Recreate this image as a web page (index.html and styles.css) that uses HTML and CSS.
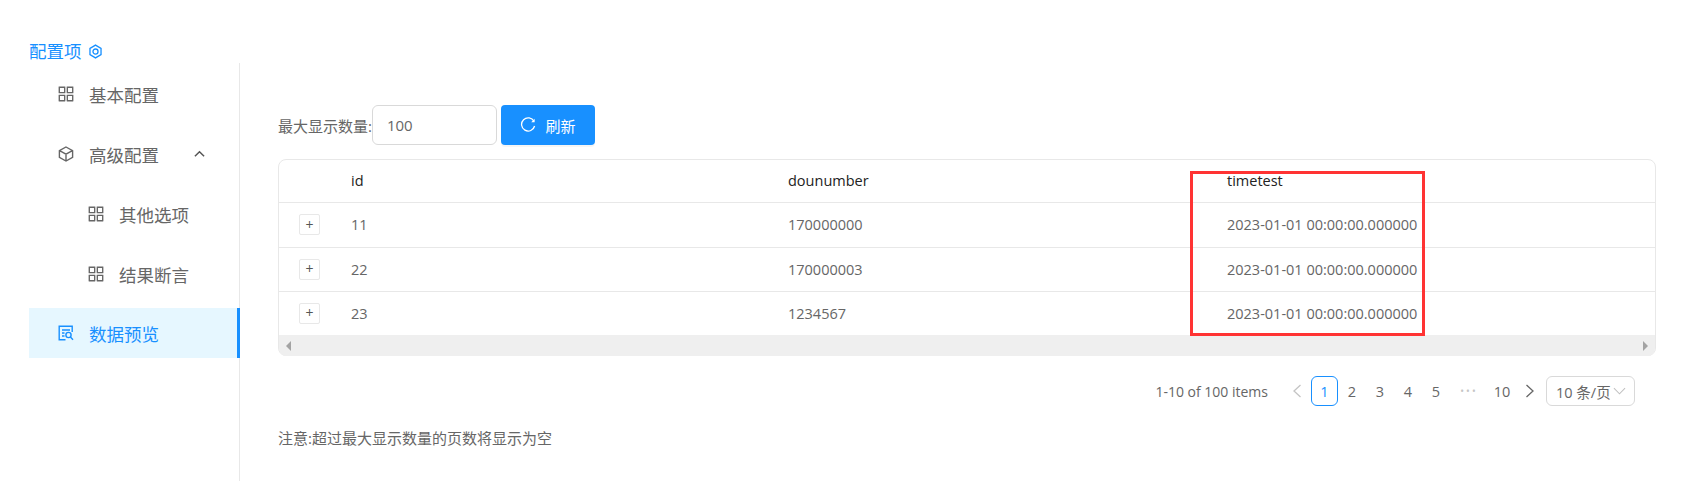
FILE: index.html
```html
<!DOCTYPE html>
<html lang="zh-CN">
<head>
<meta charset="utf-8">
<title>配置项</title>
<link rel="stylesheet" href="styles.css">
</head>
<body>
<div class="app">
  <header class="title">
    <span>配置项</span>
    <svg class="title-icon" viewBox="0 0 16 16"><path d="M8 1.2l5.900 3.400v6.800L8 14.800l-5.900-3.400V4.600z"/><circle cx="8" cy="8" r="2.700"/></svg>
  </header>
  <div class="layout">
    <nav class="menu">
      <div class="item">
        <svg class="icon" viewBox="64 64 896 896"><path class="solid" d="M464 144H160c-8.800 0-16 7.200-16 16v304c0 8.800 7.200 16 16 16h304c8.800 0 16-7.200 16-16V160c0-8.800-7.200-16-16-16zm-52 268H212V212h200v200zm452-268H560c-8.800 0-16 7.200-16 16v304c0 8.800 7.200 16 16 16h304c8.800 0 16-7.200 16-16V160c0-8.800-7.200-16-16-16zm-52 268H612V212h200v200zM464 544H160c-8.800 0-16 7.200-16 16v304c0 8.800 7.200 16 16 16h304c8.800 0 16-7.200 16-16V560c0-8.800-7.200-16-16-16zm-52 268H212V612h200v200zm452-268H560c-8.800 0-16 7.200-16 16v304c0 8.800 7.200 16 16 16h304c8.800 0 16-7.200 16-16V560c0-8.800-7.200-16-16-16zm-52 268H612V612h200v200z"/></svg>
        <span>基本配置</span>
      </div>
      <div class="item">
        <svg class="icon line" viewBox="0 0 18 18"><path d="M9 2l6.600 3.600v6.800L9 16l-6.600-3.600V5.600zM2.600 5.700L9 9.200l6.400-3.500M9 9.200V16"/></svg>
        <span>高级配置</span>
        <svg class="chevron" viewBox="0 0 12 8"><path d="M1 6.500L6 1.500l5 5"/></svg>
      </div>
      <div class="item sub">
        <svg class="icon" viewBox="64 64 896 896"><path class="solid" d="M464 144H160c-8.800 0-16 7.200-16 16v304c0 8.800 7.200 16 16 16h304c8.800 0 16-7.200 16-16V160c0-8.800-7.200-16-16-16zm-52 268H212V212h200v200zm452-268H560c-8.800 0-16 7.200-16 16v304c0 8.800 7.200 16 16 16h304c8.800 0 16-7.200 16-16V160c0-8.800-7.200-16-16-16zm-52 268H612V212h200v200zM464 544H160c-8.800 0-16 7.200-16 16v304c0 8.800 7.200 16 16 16h304c8.800 0 16-7.200 16-16V560c0-8.800-7.200-16-16-16zm-52 268H212V612h200v200zm452-268H560c-8.800 0-16 7.200-16 16v304c0 8.800 7.200 16 16 16h304c8.800 0 16-7.200 16-16V560c0-8.800-7.200-16-16-16zm-52 268H612V612h200v200z"/></svg>
        <span>其他选项</span>
      </div>
      <div class="item sub">
        <svg class="icon" viewBox="64 64 896 896"><path class="solid" d="M464 144H160c-8.800 0-16 7.200-16 16v304c0 8.800 7.200 16 16 16h304c8.800 0 16-7.200 16-16V160c0-8.800-7.200-16-16-16zm-52 268H212V212h200v200zm452-268H560c-8.800 0-16 7.200-16 16v304c0 8.800 7.200 16 16 16h304c8.800 0 16-7.200 16-16V160c0-8.800-7.200-16-16-16zm-52 268H612V212h200v200zM464 544H160c-8.800 0-16 7.200-16 16v304c0 8.800 7.200 16 16 16h304c8.800 0 16-7.200 16-16V560c0-8.800-7.200-16-16-16zm-52 268H212V612h200v200zm452-268H560c-8.800 0-16 7.200-16 16v304c0 8.800 7.200 16 16 16h304c8.800 0 16-7.200 16-16V560c0-8.800-7.200-16-16-16zm-52 268H612V612h200v200z"/></svg>
        <span>结果断言</span>
      </div>
      <div class="item active">
        <svg class="icon line" viewBox="0 0 18 18"><path d="M15.200 8V2.200H2.200v13.600h6.300M5 6h8M5 9h2.500M5 12h2.500"/><circle cx="11.500" cy="11" r="2.600"/><path d="M13.400 13l2.600 2.800"/></svg>
        <span>数据预览</span>
      </div>
    </nav>
    <main class="content">
      <div class="toolbar">
        <label class="label" for="max">最大显示数量:</label>
        <input class="input" id="max" value="100">
        <button class="button" type="button">
          <svg class="reload" viewBox="0 0 16 16"><path d="M14 4.300A6.600 6.600 0 1 0 14.600 9"/><path class="tip" d="M14.600 1.800v3.400h-3.400z"/></svg>
          <span>刷新</span>
        </button>
      </div>
      <div class="table-wrap">
        <table class="table">
          <colgroup><col class="c-exp"><col class="c-id"><col class="c-num"><col></colgroup>
          <thead>
            <tr><th></th><th>id</th><th>dounumber</th><th>timetest</th></tr>
          </thead>
          <tbody>
            <tr><td><span class="expand">+</span></td><td>11</td><td>170000000</td><td>2023-01-01 00:00:00.000000</td></tr>
            <tr><td><span class="expand">+</span></td><td>22</td><td>170000003</td><td>2023-01-01 00:00:00.000000</td></tr>
            <tr><td><span class="expand">+</span></td><td>23</td><td>1234567</td><td>2023-01-01 00:00:00.000000</td></tr>
          </tbody>
        </table>
        <div class="scrollbar"><span class="arrow left"></span><span class="arrow right"></span></div>
        <div class="highlight"></div>
      </div>
      <div class="pagination">
        <span class="total">1-10 of 100 items</span>
        <span class="pg"><svg viewBox="0 0 10 14" class="pg-arrow off"><path d="M8.500 1L2 7l6.500 6"/></svg></span>
        <span class="pg current">1</span>
        <span class="pg">2</span>
        <span class="pg">3</span>
        <span class="pg">4</span>
        <span class="pg">5</span>
        <span class="pg dots">•••</span>
        <span class="pg">10</span>
        <span class="pg"><svg viewBox="0 0 10 14" class="pg-arrow"><path d="M1.500 1L8 7l-6.500 6"/></svg></span>
        <span class="select">10 条/页<svg viewBox="0 0 14 8" class="caret"><path d="M1 1l6 6 6-6"/></svg></span>
      </div>
      <p class="note">注意:超过最大显示数量的页数将显示为空</p>
    </main>
  </div>
</div>
</body>
</html>
```
FILE: styles.css
```css
* { box-sizing: border-box; }
html, body { margin: 0; height: 100%; }
body {
  background: #fff;
  color: #666;
  font-family: "Open Sans", "Noto Sans CJK SC", sans-serif;
  font-size: 15px;
  overflow: hidden;
}
.app { height: 481px; display: flex; flex-direction: column; }
.title {
  height: 63px;
  padding: 39px 0 0 29px;
  display: flex;
  align-items: center;
  gap: 6px;
  color: #1890ff;
  font-size: 17.5px;
  line-height: 24px;
}
.title-icon { width: 15px; height: 15px; fill: none; stroke: #1890ff; stroke-width: 1.4; }
.layout { flex: 1; display: flex; min-height: 0; }
.menu {
  width: 240px;
  flex: none;
  padding: 6px 0 0 29px;
  border-right: 1px solid #e8e8e8;
  font-size: 17.5px;
}
.item {
  height: 50px;
  margin: 0 -1px 10px 0;
  padding-left: 28px;
  display: flex;
  align-items: center;
  gap: 14px;
  color: #666;
}
.item.sub { padding-left: 58px; }
.item.active {
  margin-top: -1px;
  background: #e6f7ff;
  color: #1890ff;
  border-right: 3px solid #1890ff;
}
.icon { width: 18px; height: 18px; flex: none; }
.solid { fill: currentColor; }
.line { fill: none; stroke: currentColor; stroke-width: 1.4; }
.chevron { width: 11px; height: 8px; margin-left: 21px; fill: none; stroke: #555; stroke-width: 1.6; }
.content { flex: 1; min-width: 0; padding: 42px 30px 0 38px; }
.toolbar { display: flex; align-items: center; height: 40px; }
.label { font-size: 15px; color: #666; white-space: nowrap; }
.input {
  width: 125px;
  height: 40px;
  margin-right: 4px;
  padding: 0 14px;
  border: 1px solid #d9d9d9;
  border-radius: 6px;
  font: inherit;
  color: #666;
  outline: none;
}
.button {
  width: 94px;
  height: 40px;
  display: flex;
  align-items: center;
  justify-content: center;
  gap: 9px;
  border: 0;
  border-radius: 4px;
  background: #1890ff;
  color: #fff;
  font: inherit;
  box-shadow: 0 2px 0 rgba(0, 0, 0, .04);
}
.reload { width: 16px; height: 16px; fill: none; stroke: #fff; stroke-width: 1.3; }
.tip { fill: #fff; stroke: none; }
.table-wrap {
  position: relative;
  margin-top: 14px;
  height: 197px;
  border: 1px solid #e8e8e8;
  border-radius: 8px;
}
.table { width: 100%; border-collapse: collapse; table-layout: fixed; }
.c-exp { width: 56px; }
.c-id { width: 437px; }
.c-num { width: 439px; }
.table th, .table td { padding: 0 0 0 16px; text-align: left; font-size: 14.5px; white-space: nowrap; }
.table th { height: 42px; color: #222; font-weight: 500; border-bottom: 1px solid #e8e8e8; }
.table td { height: 44px; border-bottom: 1px solid #e8e8e8; }
.table tbody tr:first-child td { height: 45px; }
.table tbody tr:last-child td { border-bottom: 0; }
.table td:first-child { padding-left: 20px; }
.expand {
  display: flex;
  align-items: center;
  justify-content: center;
  width: 21px;
  height: 21px;
  border: 1px solid #e8e8e8;
  border-radius: 2px;
  color: #555;
  font-size: 14px;
  line-height: 1;
}
.scrollbar {
  height: 21px;
  padding: 0 7px;
  background: #efefef;
  border-radius: 0 0 7px 7px;
  display: flex;
  align-items: center;
  justify-content: space-between;
}
.arrow { width: 0; height: 0; border-style: solid; border-width: 5px 0; border-color: transparent; }
.arrow.left { border-right: 5px solid #a3a3a3; }
.arrow.right { border-left: 5px solid #a3a3a3; }
.highlight {
  position: absolute;
  left: 911px;
  top: 11px;
  width: 235px;
  height: 165px;
  border: 3px solid #f33;
  pointer-events: none;
}
.pagination {
  margin-top: 20px;
  padding-right: 21px;
  height: 30px;
  display: flex;
  align-items: center;
  justify-content: flex-end;
  font-size: 14.5px;
}
.total { margin-right: 15px; font-size: 14px; white-space: nowrap; }
.pg { width: 28px; height: 30px; display: flex; align-items: center; justify-content: center; color: #666; }
.pg.current { width: 27px; border: 1px solid #1890ff; border-radius: 6px; color: #1890ff; }
.pg.dots { width: 38px; color: #c4c4c4; font-size: 10px; letter-spacing: 2px; }
.pg-arrow { width: 10px; height: 14px; fill: none; stroke: #666; stroke-width: 1.3; }
.pg-arrow.off { stroke: #c4c4c4; }
.select {
  width: 89px;
  height: 30px;
  margin-left: 2px;
  padding: 0 8px 0 9px;
  display: flex;
  align-items: center;
  justify-content: space-between;
  border: 1px solid #d9d9d9;
  border-radius: 6px;
  color: #666;
  white-space: nowrap;
}
.caret { width: 13px; height: 8px; fill: none; stroke: #c0c0c0; stroke-width: 1.1; }
.note { margin: 21px 0 0; line-height: 22px; color: #666; font-size: 15px; }
```
